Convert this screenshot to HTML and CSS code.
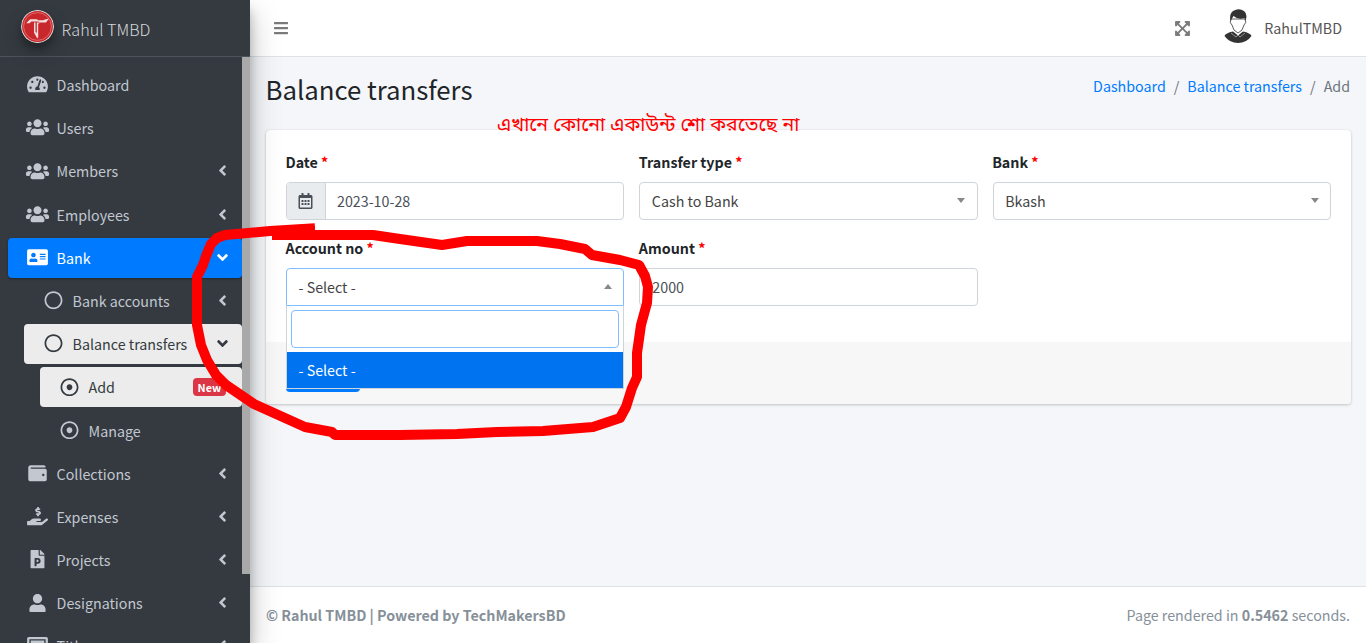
FILE: index.html
```html
<!DOCTYPE html>
<html lang="en">
<head>
<meta charset="utf-8">
<title>Balance transfers</title>
<link rel="stylesheet" href="styles.css">
</head>
<body>
<svg class="sprite" width="0" height="0">
  <symbol id="dash" viewBox="0 0 576 512"><path d="M288 32C128.940 32 0 160.940 0 320c0 52.800 14.250 102.260 39.060 144.800 5.610 9.620 16.300 15.200 27.440 15.200h443c11.140 0 21.830-5.580 27.440-15.200C561.750 422.260 576 372.800 576 320c0-159.060-128.940-288-288-288zm0 64c14.710 0 26.580 10.130 30.320 23.650-1.110 2.260-2.640 4.230-3.450 6.670l-9.220 27.670c-5.130 3.490-10.970 6.010-17.640 6.010-17.670 0-32-14.330-32-32S270.330 96 288 96zM96 384c-17.670 0-32-14.330-32-32s14.330-32 32-32 32 14.330 32 32-14.330 32-32 32zm48-160c-17.670 0-32-14.330-32-32s14.330-32 32-32 32 14.330 32 32-14.330 32-32 32zm246.770-72.410l-61.330 184C343.130 347.330 352 364.540 352 384c0 11.720-3.380 22.550-8.880 32H232.880c-5.500-9.450-8.880-20.280-8.880-32 0-33.940 26.500-61.430 59.900-63.590l61.340-184.010c4.170-12.560 17.730-19.450 30.360-15.170 12.570 4.190 19.350 17.790 15.170 30.360zm14.660 57.200l15.520-46.550c3.470-1.290 7.130-2.230 11.050-2.230 17.670 0 32 14.330 32 32s-14.330 32-32 32c-11.380-.010-21.250-6.100-26.570-15.220zM480 384c-17.670 0-32-14.330-32-32s14.330-32 32-32 32 14.330 32 32-14.330 32-32 32z"/></symbol>
  <symbol id="users" viewBox="0 0 640 512"><path d="M96 224c35.300 0 64-28.700 64-64s-28.700-64-64-64-64 28.700-64 64 28.700 64 64 64zm448 0c35.300 0 64-28.700 64-64s-28.700-64-64-64-64 28.700-64 64 28.700 64 64 64zm32 32h-64c-17.600 0-33.500 7.100-45.100 18.600 40.300 22.100 68.900 62 75.100 109.400h66c17.700 0 32-14.300 32-32v-32c0-35.300-28.700-64-64-64zm-256 0c61.900 0 112-50.100 112-112S381.900 32 320 32 208 82.100 208 144s50.100 112 112 112zm76.800 32h-8.300c-20.800 10-43.900 16-68.500 16s-47.600-6-68.500-16h-8.300C179.600 288 128 339.600 128 403.200V432c0 26.500 21.500 48 48 48h288c26.500 0 48-21.500 48-48v-28.800c0-63.600-51.600-115.200-115.200-115.200zm-223.700-13.400C161.500 263.100 145.600 256 128 256H64c-35.300 0-64 28.700-64 64v32c0 17.700 14.300 32 32 32h65.900c6.300-47.400 34.900-87.300 75.200-109.400z"/></symbol>
  <symbol id="angle" viewBox="0 0 256 512"><path d="M31.700 239l136-136c9.400-9.400 24.600-9.400 33.900 0l22.600 22.600c9.400 9.400 9.400 24.600 0 33.900L127.900 256l96.400 96.400c9.400 9.400 9.400 24.600 0 33.900L201.700 409c-9.400 9.400-24.600 9.400-33.900 0l-136-136c-9.500-9.400-9.500-24.600-.1-34z"/></symbol>
  <symbol id="card" viewBox="0 0 576 512"><path d="M528 32H48C21.500 32 0 53.500 0 80v352c0 26.500 21.500 48 48 48h480c26.500 0 48-21.500 48-48V80c0-26.500-21.500-48-48-48zm-352 96c35.300 0 64 28.700 64 64s-28.700 64-64 64-64-28.700-64-64 28.700-64 64-64zm112 236.800c0 10.600-10 19.200-22.400 19.200H86.400C74 384 64 375.400 64 364.800v-19.200c0-31.800 30.100-57.600 67.200-57.600h5c12.300 5.100 25.700 8 39.800 8s27.600-2.900 39.800-8h5c37.100 0 67.200 25.800 67.200 57.600v19.200zM512 312c0 4.400-3.600 8-8 8H360c-4.400 0-8-3.600-8-8v-16c0-4.400 3.600-8 8-8h144c4.400 0 8 3.600 8 8v16zm0-64c0 4.400-3.600 8-8 8H360c-4.400 0-8-3.600-8-8v-16c0-4.400 3.600-8 8-8h144c4.400 0 8 3.600 8 8v16zm0-64c0 4.400-3.600 8-8 8H360c-4.400 0-8-3.600-8-8v-16c0-4.400 3.600-8 8-8h144c4.400 0 8 3.600 8 8v16z"/></symbol>
  <symbol id="circle" viewBox="0 0 512 512"><path d="M256 8C119 8 8 119 8 256s111 248 248 248 248-111 248-248S393 8 256 8zm0 448c-110.500 0-200-89.500-200-200S145.500 56 256 56s200 89.500 200 200-89.500 200-200 200z"/></symbol>
  <symbol id="dot" viewBox="0 0 512 512"><path d="M256 56c110.500 0 200 89.500 200 200s-89.500 200-200 200S56 366.500 56 256 145.500 56 256 56m0-48C119 8 8 119 8 256s111 248 248 248 248-111 248-248S393 8 256 8zm0 168c-44.200 0-80 35.800-80 80s35.800 80 80 80 80-35.800 80-80-35.800-80-80-80z"/></symbol>
  <symbol id="wallet" viewBox="0 0 512 512"><path d="M461.200 128H80c-8.840 0-16-7.160-16-16s7.160-16 16-16h384c8.840 0 16-7.160 16-16 0-26.510-21.490-48-48-48H64C28.650 32 0 60.650 0 96v320c0 35.350 28.650 64 64 64h397.200c28.020 0 50.800-21.530 50.800-48V176c0-26.470-22.780-48-50.800-48zM416 336c-17.670 0-32-14.330-32-32s14.330-32 32-32 32 14.330 32 32-14.330 32-32 32z"/></symbol>
  <symbol id="hand" viewBox="0 0 576 512"><path d="M271.060 144.300l54.270 14.300a8.590 8.590 0 0 1 6.630 8.100c0 4.600-4.090 8.400-9.120 8.400h-35.600a30 30 0 0 1-11.190-2.200c-5.240-2.200-11.280-1.700-15.300 2l-19 17.500a11.680 11.680 0 0 0-2.250 2.660 11.420 11.420 0 0 0 3.880 15.740 83.770 83.770 0 0 0 34.510 11.500V240c0 8.800 7.830 16 17.370 16h17.370c9.550 0 17.380-7.200 17.380-16v-17.600c32.930-3.600 57.840-31 53.500-63-3.150-23-22.460-41.300-46.560-47.700L282.680 97.400a8.590 8.590 0 0 1-6.630-8.100c0-4.600 4.090-8.400 9.120-8.400h35.600A30 30 0 0 1 332 83.100c5.230 2.200 11.280 1.700 15.300-2l19-17.500A11.310 11.310 0 0 0 368.470 61a11.430 11.430 0 0 0-3.840-15.780 83.820 83.820 0 0 0-34.520-11.500V16c0-8.800-7.820-16-17.370-16h-17.370C285.820 0 278 7.200 278 16v17.600c-32.890 3.600-57.850 31-53.510 63 3.150 23 22.570 41.300 46.570 47.700zM565.270 328.100c-11.800-10.700-30.200-10-42.600 0L430.270 402a63.640 63.640 0 0 1-40 14H272a16 16 0 0 1 0-32h78.290c15.900 0 30.710-10.900 33.250-26.600a31.200 31.200 0 0 0 .460-5.460A32 32 0 0 0 352 320H192a117.660 117.660 0 0 0-74.100 26.290L71.400 384H16a16 16 0 0 0-16 16v96a16 16 0 0 0 16 16h356.770a64 64 0 0 0 40-14L564 377a32 32 0 0 0 1.280-48.900z"/></symbol>
  <symbol id="file" viewBox="0 0 384 512"><path d="M193.700 271.200c8.800 0 15.500 2.700 20.300 8.100 9.600 10.900 9.800 32.700-.2 44.100-4.900 5.600-11.900 8.500-21.100 8.500h-26.900v-60.700h27.900zM377 105L279 7c-4.500-4.500-10.600-7-17-7h-6v128h128v-6.100c0-6.300-2.500-12.400-7-16.900zm-153 31V0H24C10.700 0 0 10.700 0 24v464c0 13.300 10.700 24 24 24h336c13.300 0 24-10.700 24-24V160H248c-13.200 0-24-10.800-24-24zm53 165.200c0 90.300-88.800 77.600-111.100 77.600V436c0 6.600-5.400 12-12 12h-30.800c-6.600 0-12-5.400-12-12V236.200c0-6.600 5.400-12 12-12h81c44.500 0 72.900 32.800 72.900 77z"/></symbol>
  <symbol id="user" viewBox="0 0 448 512"><path d="M224 256c70.700 0 128-57.300 128-128S294.700 0 224 0 96 57.300 96 128s57.300 128 128 128zm89.600 32h-16.700c-22.200 10.200-46.900 16-72.900 16s-50.600-5.800-72.900-16h-16.700C60.200 288 0 348.200 0 422.400V464c0 26.500 21.500 48 48 48h352c26.500 0 48-21.500 48-48v-41.600c0-74.200-60.200-134.400-134.400-134.400z"/></symbol>
  <symbol id="bars" viewBox="0 0 448 512"><path d="M16 132h416c8.800 0 16-7.200 16-16V76c0-8.800-7.200-16-16-16H16C7.200 60 0 67.200 0 76v40c0 8.800 7.200 16 16 16zm0 160h416c8.800 0 16-7.200 16-16v-40c0-8.800-7.200-16-16-16H16c-8.800 0-16 7.200-16 16v40c0 8.800 7.200 16 16 16zm0 160h416c8.800 0 16-7.200 16-16v-40c0-8.800-7.200-16-16-16H16c-8.800 0-16 7.200-16 16v40c0 8.800 7.200 16 16 16z"/></symbol>
  <symbol id="expand" viewBox="0 0 448 512"><path d="M448 344v112a23.940 23.940 0 0 1-24 24H312c-21.390 0-32.090-25.900-17-41l36.200-36.200L224 295.600 116.770 402.900 153 439c15.090 15.100 4.390 41-17 41H24a23.940 23.940 0 0 1-24-24V344c0-21.400 25.890-32.100 41-17l36.190 36.200L184.460 256 77.180 148.700 41 185c-15.100 15.100-41 4.400-41-17V56a23.940 23.940 0 0 1 24-24h112c21.390 0 32.090 25.900 17 41l-36.200 36.200L224 216.400l107.230-107.300L295 73c-15.090-15.100-4.390-41 17-41h112a23.940 23.940 0 0 1 24 24v112c0 21.400-25.890 32.100-41 17l-36.190-36.200L263.540 256l107.280 107.300L407 327.100c15.100-15.200 41-4.500 41 16.900z"/></symbol>
  <symbol id="cal" viewBox="0 0 448 512"><path d="M148 288h-40c-6.600 0-12-5.400-12-12v-40c0-6.600 5.400-12 12-12h40c6.600 0 12 5.400 12 12v40c0 6.600-5.400 12-12 12zm108-12v-40c0-6.600-5.400-12-12-12h-40c-6.600 0-12 5.400-12 12v40c0 6.600 5.400 12 12 12h40c6.600 0 12-5.400 12-12zm96 0v-40c0-6.600-5.400-12-12-12h-40c-6.600 0-12 5.400-12 12v40c0 6.600 5.400 12 12 12h40c6.600 0 12-5.400 12-12zm-96 96v-40c0-6.600-5.400-12-12-12h-40c-6.600 0-12 5.400-12 12v40c0 6.600 5.400 12 12 12h40c6.600 0 12-5.400 12-12zm-96 0v-40c0-6.600-5.400-12-12-12h-40c-6.600 0-12 5.400-12 12v40c0 6.600 5.400 12 12 12h40c6.600 0 12-5.400 12-12zm192 0v-40c0-6.600-5.400-12-12-12h-40c-6.600 0-12 5.400-12 12v40c0 6.600 5.400 12 12 12h40c6.600 0 12-5.400 12-12zm96-260v352c0 26.500-21.500 48-48 48H48c-26.500 0-48-21.500-48-48V112c0-26.500 21.500-48 48-48h48V12c0-6.600 5.400-12 12-12h40c6.600 0 12 5.400 12 12v52h128V12c0-6.600 5.400-12 12-12h40c6.600 0 12 5.400 12 12v52h48c26.500 0 48 21.500 48 48zm-48 346V160H48v298c0 3.300 2.700 6 6 6h340c3.300 0 6-2.700 6-6z"/></symbol>
  <symbol id="title" viewBox="0 0 576 512"><path fill-rule="evenodd" d="M48 0h480q48 0 48 48v416q0 48-48 48H48q-48 0-48-48V48Q0 0 48 0zm16 64v384h448V64z"/><path d="M100 100h376v312H100z"/></symbol>
</svg>

<div class="app">
  <aside class="sidebar">
    <div class="brand">
      <svg class="brand-logo" viewBox="0 0 33 33"><circle cx="16.500" cy="16.500" r="16.500" fill="#ddd"/><circle cx="16.500" cy="16.500" r="15.400" fill="#c8282c"/><circle cx="16.500" cy="16.500" r="13.900" fill="none" stroke="#e27b7c" stroke-width=".8"/><path fill="#f3dede" d="M5.200 13.200 9 9.200h7l1 1h5l3-1 3-.6-3 3.900h-6.600l-1-1.100h-7l-2 1.800zM13 12.500h1.500v9.500l2 1.500v5.500l-3.500-6.400zM15.800 12.500h2.400v1h-1v14.500l-1.400-2z"/></svg>
      <span class="brand-name">Rahul TMBD</span>
    </div>
    <div class="scroll">
      <nav class="nav">
        <a class="item"><svg class="ico"><use href="#dash"/></svg><span>Dashboard</span></a>
        <a class="item"><svg class="ico wide"><use href="#users"/></svg><span>Users</span></a>
        <a class="item"><svg class="ico wide"><use href="#users"/></svg><span>Members</span><svg class="arrow"><use href="#angle"/></svg></a>
        <a class="item"><svg class="ico wide"><use href="#users"/></svg><span>Employees</span><svg class="arrow"><use href="#angle"/></svg></a>
        <a class="item active"><svg class="ico"><use href="#card"/></svg><span>Bank</span><svg class="arrow down"><use href="#angle"/></svg></a>
        <a class="item level2"><svg class="ico"><use href="#circle"/></svg><span>Bank accounts</span><svg class="arrow"><use href="#angle"/></svg></a>
        <a class="item level2 open"><svg class="ico"><use href="#circle"/></svg><span>Balance transfers</span><svg class="arrow down"><use href="#angle"/></svg></a>
        <a class="item level3 open"><svg class="ico"><use href="#dot"/></svg><span>Add</span><b class="badge">New</b></a>
        <a class="item level3"><svg class="ico"><use href="#dot"/></svg><span>Manage</span></a>
        <a class="item"><svg class="ico"><use href="#wallet"/></svg><span>Collections</span><svg class="arrow"><use href="#angle"/></svg></a>
        <a class="item"><svg class="ico"><use href="#hand"/></svg><span>Expenses</span><svg class="arrow"><use href="#angle"/></svg></a>
        <a class="item"><svg class="ico"><use href="#file"/></svg><span>Projects</span><svg class="arrow"><use href="#angle"/></svg></a>
        <a class="item"><svg class="ico"><use href="#user"/></svg><span>Designations</span><svg class="arrow"><use href="#angle"/></svg></a>
        <a class="item"><svg class="ico"><use href="#title"/></svg><span>Titles</span><svg class="arrow"><use href="#angle"/></svg></a>
      </nav>
      <div class="thumb"></div>
    </div>
  </aside>

  <div class="main">
    <header class="topbar">
      <svg class="bars"><use href="#bars"/></svg>
      <svg class="expand"><use href="#expand"/></svg>
      <svg class="avatar" viewBox="0 0 34 36"><path fill="#fff" stroke="#333" stroke-width=".8" d="M10 11q-2 4 1 6 1 6 6 8 5-2 6-8 3-2 1-6z"/><path fill="#333" d="M9.500 13Q8 6 12 3q6-3.500 11 0 4 3 1.500 10l-1-3Q17 12 12.500 8zM3.500 28q1-3 8.500-4.500l5 4 5-4Q29.500 25 30.500 28q-5 7-13.500 7T3.500 28z"/><path fill="none" stroke="#bbb" stroke-width=".7" d="M10 25l5 4 2-2 2 2 5-4"/></svg>
      <span class="username">RahulTMBD</span>
    </header>

    <main class="content">
      <div class="page-head">
        <h1>Balance transfers</h1>
        <div class="crumbs"><a>Dashboard</a><i>/</i><a>Balance transfers</a><i>/</i><span>Add</span></div>
      </div>

      <section class="card">
        <div class="fields">
          <div class="field"><label>Date <em>*</em></label>
            <div class="control group"><span class="addon"><svg><use href="#cal"/></svg></span><span class="value">2023-10-28</span></div></div>
          <div class="field"><label>Transfer type <em>*</em></label>
            <div class="control select"><span>Cash to Bank</span><i class="caret"></i></div></div>
          <div class="field"><label>Bank <em>*</em></label>
            <div class="control select"><span>Bkash</span><i class="caret"></i></div></div>
          <div class="field"><label>Account no <em>*</em></label>
            <div class="control select expanded"><span>- Select -</span><i class="caret up"></i>
              <div class="dropdown"><div class="search"></div><div class="option">- Select -</div></div>
            </div></div>
          <div class="field"><label>Amount <em>*</em></label>
            <div class="control input">2000</div></div>
        </div>
        <div class="card-foot"><div class="button"></div></div>
      </section>
    </main>

    <footer class="footer"><b>© Rahul TMBD | Powered by TechMakersBD</b><span>Page rendered in <b>0.5462</b> seconds.</span></footer>
  </div>
</div>

<div class="note" lang="bn">এখানে কোনো একাউন্ট শো করতেছে না</div>
<svg class="marker" viewBox="0 0 1366 643"><path d="M310 228.500 270 231 225 235 217 238 211 244 206 256 203 265 197 277V325L201 345 207 360 216 375 226 385 254 404 285 418 305 427 332 432 335 435H400L457 434 497 432 543 431 593 427 620 418 626 407 632 388 637 377V353L641 325 647 303 648 287 645 276 639 265 620 260 592 255 585 249 560 244 537 241H467L442 245 400 239 373 235H277M277 231H310"/></svg>
</body>
</html>
```
FILE: styles.css
```css
* { box-sizing: border-box; }
body { margin: 0; font: 14.280px/24px "Noto Sans CJK SC", "Noto Sans", sans-serif; color: #212529; background: #f4f6f9; overflow: hidden; }
svg { fill: currentColor; flex: none; }
.sprite { position: absolute; }
.app { display: flex; height: 643px; }

.sidebar { width: 250px; height: 643px; flex: none; display: flex; flex-direction: column; overflow: visible; z-index: 2; background: #343a40; color: #c2c7d0; box-shadow: 0 14px 28px rgba(0,0,0,.25), 0 10px 10px rgba(0,0,0,.22); }
.brand { height: 57px; flex: none; display: flex; align-items: center; gap: 7.500px; padding: 0 0 2px 21px; border-bottom: 1px solid #4b545c; }
.brand-logo { width: 33px; height: 33px; border-radius: 50%; margin-bottom: 2px; box-shadow: 0 10px 20px rgba(0,0,0,.19), 0 6px 6px rgba(0,0,0,.23); }
.brand-name { font-size: 16.150px; font-weight: 300; color: rgba(255,255,255,.8); padding-top: 4px; }
.scroll { display: flex; flex: 1; min-height: 0; overflow: hidden; }
.nav { width: 242px; padding: 8px 0 0 8px; }
.thumb { width: 8px; height: 517px; background: #a9a9a9; }
.item { display: flex; align-items: center; height: 40px; margin-bottom: 3.2px; padding-left: 16px; border-radius: 4px; }
.item span { white-space: nowrap; margin-left: 5.600px; }
.ico { width: 27px; height: 18.500px; margin-bottom: 1px; }
.arrow { width: 9px; height: 17px; margin: 0 15.500px 1px auto; }
.arrow.down { transform: rotate(-90deg); }
.active { background: #007bff; color: #fff; box-shadow: 0 1px 3px rgba(0,0,0,.12), 0 1px 2px rgba(0,0,0,.24); }
.level2 { margin-left: 16px; }
.level3 { margin-left: 32px; }
.open { background: #ebeceb; color: #343a40; }
.badge { margin: 0 16px 0 auto; padding: 0 4.800px; height: 18px; font-size: 10.800px; line-height: 18px; border-radius: 4px; background: #dc3545; color: #fff; }

.main { flex: 1; display: flex; flex-direction: column; min-width: 0; }
.topbar { height: 57px; display: flex; align-items: center; padding: 0 24px; background: #fff; border-bottom: 1px solid #dee2e6; color: #7b7b7b; }
.bars { width: 14px; height: 16px; }
.expand { width: 15px; height: 17px; margin-left: auto; }
.avatar { width: 34px; height: 36px; margin: 0 9.500px 4px 31px; }
.username { color: #555; }
.content { flex: 1; padding: 0 15px 0 16px; }
.page-head { display: flex; justify-content: space-between; height: 73px; padding: 14px 1px 0 0; }
h1 { margin: 0 0 0 -.5px; font-size: 25.750px; line-height: 35px; font-weight: 400; }
.crumbs { padding-top: 3px; color: #6c757d; }
.crumbs a { color: #007bff; }
.crumbs i { font-style: normal; margin: 0 8px; }
.card { background: #fff; border-radius: 4px; box-shadow: 0 0 1px rgba(0,0,0,.125), 0 1px 3px rgba(0,0,0,.2); }
.fields { display: grid; grid-template-columns: repeat(3, 1fr); gap: 16px 15px; padding: 20px 20px 36px; }
.field label { display: block; font-weight: 700; margin: 0 0 8px -.5px; }
.field em { font-style: normal; color: red; }
.control { position: relative; display: flex; align-items: center; height: 38px; border: 1px solid #ced4da; border-radius: 4px; background: #fff; color: #495057; }
.addon { display: flex; align-items: center; justify-content: center; width: 39px; height: 36px; background: #e9ecef; border-right: 1px solid #ced4da; border-radius: 3px 0 0 3px; }
.addon svg { width: 15px; height: 16px; margin-right: 1px; }
.value { padding-left: 11px; }
.select { justify-content: space-between; padding: 0 11.500px 0 11.500px; color: #444; }
.caret { border: 4.500px solid transparent; border-top: 5px solid #888; border-bottom: 0; margin-bottom: 2px; }
.caret.up { border-top: 0; border-bottom: 5px solid #888; }
.input { padding-left: 12px; }
.expanded { border-color: #80bdff; border-radius: 4px 4px 0 0; }
.dropdown { position: absolute; top: 37px; left: -1px; right: -1px; border: 1px solid #ced4da; border-top: 0; background: #fff; }
.search { height: 38px; margin: 4px 4px 4px; border: 1px solid #80bdff; border-radius: 4px; }
.option { height: 36px; padding: 6px 11.500px; background: #0074f0; color: #fff; }
.card-foot { height: 62px; padding: 12px 20px; background: #f7f7f7; border-radius: 0 0 4px 4px; }
.button { width: 74px; height: 38px; border-radius: 4px; background: #007bff; }
.footer { height: 57px; display: flex; justify-content: space-between; align-items: center; padding: 0 16px 0; background: #fff; border-top: 1px solid #dee2e6; color: #869099; }

.note { position: absolute; z-index: 5; left: 497px; top: 110px; font-family: "Noto Sans Bengali", "Noto Sans", sans-serif; font-size: 19.500px; line-height: 32px; color: red; white-space: nowrap; }
.marker { position: absolute; z-index: 6; left: 0; top: 0; width: 1366px; height: 643px; fill: none; stroke: red; stroke-width: 10px; stroke-linejoin: round; stroke-linecap: square; pointer-events: none; }
```
